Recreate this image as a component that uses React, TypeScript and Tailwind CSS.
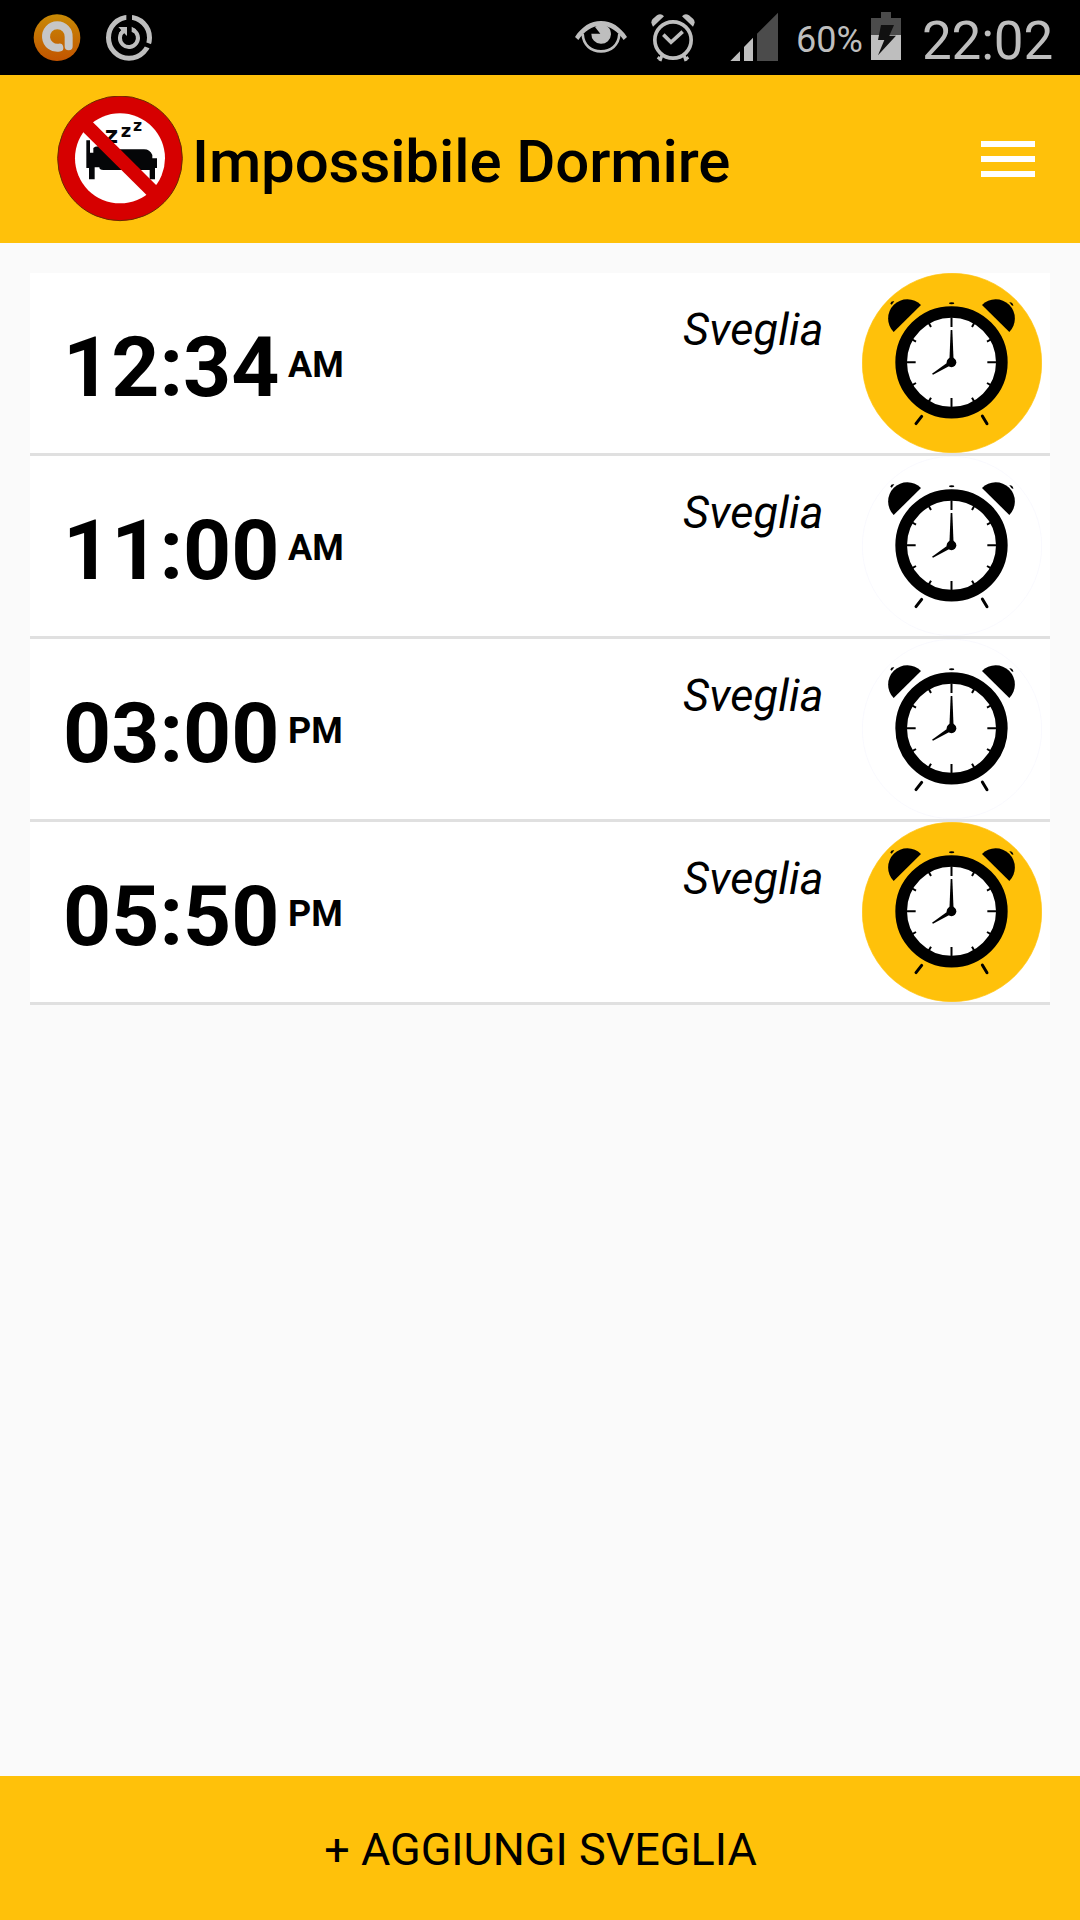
import React from "react";

type Alarm = {
  time: string;
  period: "AM" | "PM";
  label: string;
  enabled: boolean;
};

const alarms: Alarm[] = [
  { time: "12:34", period: "AM", label: "Sveglia", enabled: true },
  { time: "11:00", period: "AM", label: "Sveglia", enabled: false },
  { time: "03:00", period: "PM", label: "Sveglia", enabled: false },
  { time: "05:50", period: "PM", label: "Sveglia", enabled: true },
];

function StatusBar() {
  return (
    <div className="flex h-[75px] shrink-0 bg-black pl-[33px] text-[#bebebe]">
      {/* antivirus */}
      <svg className="h-[75px] w-12" viewBox="99 0 144 225" fill="none">
        <defs>
          <linearGradient id="orange" x1="0" y1="0" x2="0" y2="1">
            <stop offset="0" stopColor="#c88a05" />
            <stop offset="1" stopColor="#c25400" />
          </linearGradient>
        </defs>
        <circle cx="171" cy="113" r="70" fill="url(#orange)" />
        <path d="M178 143A34 34 0 1 1 206 112V139" stroke="#c6c6c6" strokeWidth="24" strokeLinecap="round" />
      </svg>

      {/* auto restart */}
      <svg className="ml-[25px] h-[75px] w-[46px]" viewBox="318 0 138 225" fill="none">
        <circle cx="387" cy="113" r="61.5" stroke="currentColor" strokeWidth="15" />
        <path d="M387.500 40V70" stroke="#000" strokeWidth="17" />
        <path d="M425 129L462 143" stroke="#000" strokeWidth="13" />
        <path d="M370 93A27 27 0 1 0 399 90" stroke="currentColor" strokeWidth="12" />
        <path d="M355 81H381V108L372 99L364 106L357 99L364 91Z" fill="currentColor" />
        <path d="M395 80L408 88L403 98L395 96Z" fill="currentColor" />
      </svg>

      {/* smart stay */}
      <svg className="ml-[423px] h-[75px] w-[52px]" viewBox="45 0 156 225" fill="none">
        <path d="M45 111C65 80 92 63 123 63S181 80 201 111L191 120C174 94 150 77 123 77S72 94 55 120Z" fill="currentColor" />
        <path d="M68 102C70 136 94 154 123 154S176 136 178 102" stroke="currentColor" strokeWidth="8" />
        <path d="M123 74C143 74 153 86 153 103A29.500 29.500 0 0 1 94 101L121 101L105 81Q113 74 123 74Z" fill="currentColor" />
      </svg>

      <svg className="ml-6 h-[75px] w-11" viewBox="273 0 132 225" fill="none">
        <circle cx="339" cy="120" r="54.500" stroke="currentColor" strokeWidth="11" />
        <path d="M310 104L333 127L368 95" stroke="currentColor" strokeWidth="11" />
        <path d="M279 80Q270 66 278 57L291 46Q303 39 312 49Z" fill="currentColor" />
        <path d="M399 80Q408 66 400 57L387 46Q375 39 366 49Z" fill="currentColor" />
        <path d="M306 166L300 183M372 166L378 183M293 172L304 180M385 172L374 180" stroke="currentColor" strokeWidth="9" />
      </svg>

      <svg className="ml-[35px] h-[75px] w-12" viewBox="510 0 144 225">
        <path d="M511 183L540 154V183ZM552 183V141L579 113V183Z" fill="currentColor" />
        <path d="M591 183V101L654 38V183Z" fill="#4b4b4b" />
      </svg>

      <span className="ml-[18px] w-[75px] whitespace-nowrap pt-[5px] text-[36px] leading-[70px]">60%</span>

      <svg className="h-[75px] w-[30px]" viewBox="273 0 90 225">
        <path d="M303 36H333V54H363V105H273V54H303Z" fill="#4b4b4b" />
        <path d="M273 105H363V180H273Z" fill="currentColor" />
        <path d="M303 75H342L328 107H348L294 166L313 120H294Z" fill="#111" />
      </svg>

      <span className="ml-[21px] whitespace-nowrap pt-[6px] text-[53px] leading-[70px] tracking-[-0.2px]">22:02</span>
    </div>
  );
}

function Logo() {
  return (
    <svg className="h-[126px] w-[126px] shrink-0" viewBox="51 48 378 378">
      <circle cx="240" cy="235" r="187" fill="#d60000" stroke="#6b2a00" strokeWidth="3" />
      <circle cx="240" cy="235" r="135" fill="#fff" />
      <g fill="#050608" fontFamily="DejaVu Sans" fontWeight="bold">
        <path d="M139 181H150V218H160V204Q164 199 175 199L200 208H312Q330 208 337 225V235H351V264H345V298H329V270H190Q178 270 178 262H164V298H147V264H139Z" />
        <text x="194" y="190" fontSize="69">z</text>
        <text x="242" y="171" fontSize="54">z</text>
        <text x="279" y="152" fontSize="47">z</text>
      </g>
      <path d="M145 142.500L334 330" stroke="#d60000" strokeWidth="41.500" strokeLinecap="square" />
    </svg>
  );
}

function AlarmClock({ enabled }: { enabled: boolean }) {
  return (
    <svg className="mr-2 h-[180px] w-[180px] shrink-0" viewBox="66 39 540 540">
      <circle cx="336" cy="309" r="269" fill={enabled ? "#ffc10a" : "#fff"} stroke={enabled ? "#ffc10a" : "#f6f6fd"} strokeWidth="2" />
      <circle cx="334.500" cy="307" r="151" fill="#fff" stroke="#000" strokeWidth="35" />
      {/* bells */}
      <path d="M243 135L161 216A57.600 57.600 0 0 1 243 135Z" />
      <path d="M426 135L508 216A57.600 57.600 0 0 0 426 135Z" />
      <path d="M151 131Q153 122 163 124L155 134Z" />
      <path d="M508 127Q519 126 520 138L515 136Z" />
      <ellipse cx="335" cy="130" rx="8" ry="3" />
      {/* hour marks */}
      <g stroke="#000" strokeWidth="6">
        <path d="M334.500 172V201M334.500 442V414M200 307H227M469 307H442" />
        <path d="M265 187L273 201M404 187L396 201M265 427L273 413M404 427L396 413M214 237L228 245M455 237L441 245M214 377L228 369M455 377L441 369" />
      </g>
      <path d="M332 210H337L341 307H328Z" />
      <path d="M276 341L332 301L338 313L279 344Z" />
      <circle cx="334.500" cy="307" r="14.500" />
      <path d="M245 469L228 491M427 468L441 491" stroke="#000" strokeWidth="9" strokeLinecap="round" />
    </svg>
  );
}

function AlarmRow({ alarm }: { alarm: Alarm }) {
  return (
    <li className="flex h-[183px] border-b-[3px] border-[#e0e0e0] bg-white">
      <div className="flex flex-1 items-center pl-[33px]">
        <span className="w-[225px] whitespace-nowrap pt-[9px] text-[84px] font-bold leading-[100px]">{alarm.time}</span>
        <span className="pt-[3px] text-[36px] font-bold leading-[42px]">{alarm.period}</span>
      </div>
      <span className="w-[179px] pt-[30px] text-[45px] italic leading-[54px] tracking-[0.2px]">{alarm.label}</span>
      <AlarmClock enabled={alarm.enabled} />
    </li>
  );
}

export default function App() {
  return (
    <div className="flex h-[1920px] w-[1080px] flex-col overflow-hidden bg-[#fafafa] font-['Roboto',sans-serif] text-black">
      <StatusBar />

      <header className="flex h-[168px] shrink-0 items-center bg-[#ffc10a] pl-[57px] pr-[45px]">
        <Logo />
        <h1 className="ml-[9px] flex-1 pt-[5px] text-[60px] font-medium leading-[70px] tracking-[-0.1px]">Impossibile Dormire</h1>
        <button type="button" aria-label="Menu" className="flex w-[54px] flex-col gap-[9px]">
          <span className="h-1.5 bg-white" />
          <span className="h-1.5 bg-white" />
          <span className="h-1.5 bg-white" />
        </button>
      </header>

      <ul className="flex-1 p-[30px]">
        {alarms.map((alarm) => (
          <AlarmRow key={alarm.time} alarm={alarm} />
        ))}
      </ul>

      <button type="button" className="h-36 shrink-0 bg-[#ffc10a] pl-px pt-[3px] text-[45px]">
        + AGGIUNGI SVEGLIA
      </button>
    </div>
  );
}
